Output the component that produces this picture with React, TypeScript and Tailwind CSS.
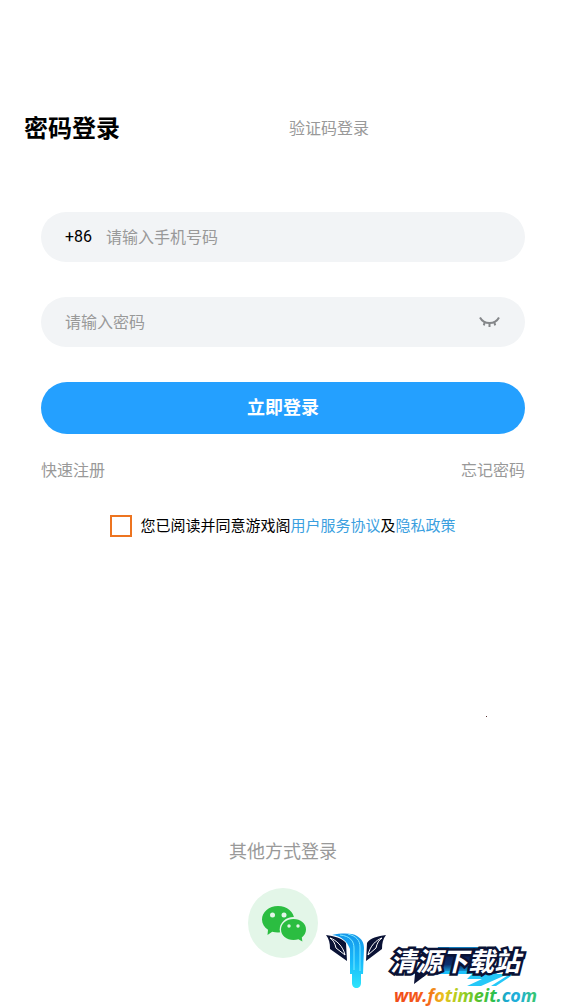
import { useState } from "react";

const fontStack = "font-['Roboto','Noto_Sans_CJK_SC',sans-serif]";

const ClosedEye = () => {
    return (
        <svg viewBox="0 0 22 12" className="w-[22px] h-3" fill="none" stroke="#85878a" strokeWidth="2">
            <path d="M1 1.500C3 5.200 6.500 7 10.500 7s7.500-1.800 9.500-5.500" />
            <path d="M10.500 7v4M5.800 6l-1 3.400M15.200 6l1 3.400" />
        </svg>
    );
};

const WechatIcon = () => {
    return (
        <svg viewBox="0 0 70 70" className="size-[70px]">
            <circle cx="35" cy="35" r="35" fill="#e3f6e8" />
            <path
                fill="#2bbd41"
                d="M30 18C21 18 14 24 14 31.500c0 4.200 2.300 7.800 6 10.300L19.500 47l4.700-3.300c1.800.5 3.800.8 5.800.8 9 0 16.200-5.800 16.200-13S39 18 30 18z"
            />
            <ellipse cx="45.500" cy="41.500" rx="13.800" ry="12.400" fill="#e3f6e8" />
            <path
                fill="#2bbd41"
                d="M45.500 31c-7 0-12.500 4.600-12.500 10.500S38.500 52 45.500 52c1.800 0 3.400-.3 4.900-.8l4 2.300-.6-4c2.600-2 4.200-4.800 4.200-8C58 35.600 52.500 31 45.500 31z"
            />
            <g fill="#e3f6e8">
                <circle cx="24.500" cy="27" r="2.500" />
                <circle cx="36" cy="27" r="2.500" />
                <circle cx="41" cy="38" r="1.700" />
                <circle cx="50" cy="38" r="1.700" />
            </g>
        </svg>
    );
};

const SiteMark = () => {
    return (
        <svg viewBox="0 0 214 74" className="w-[214px] h-[74px]">
            <defs>
                <linearGradient id="beam" x1="0" y1="0" x2="0" y2="1">
                    <stop offset="0" stopColor="#1596ea" />
                    <stop offset="0.5" stopColor="#18b9fb" />
                    <stop offset="1" stopColor="#2ee4fb" />
                </linearGradient>
                <linearGradient id="plate" x1="0" y1="0" x2="0" y2="1">
                    <stop offset="0" stopColor="#1586c8" />
                    <stop offset="0.25" stopColor="#0a1b50" />
                    <stop offset="0.65" stopColor="#0c2f6e" />
                    <stop offset="1" stopColor="#1cc0fa" />
                </linearGradient>
                <linearGradient id="rainbow" x1="0" y1="0" x2="1" y2="0">
                    <stop offset="0" stopColor="#f04a1c" />
                    <stop offset="0.23" stopColor="#f5601a" />
                    <stop offset="0.34" stopColor="#ecc01c" />
                    <stop offset="0.46" stopColor="#a8d020" />
                    <stop offset="0.6" stopColor="#50c030" />
                    <stop offset="0.7" stopColor="#2cc04c" />
                    <stop offset="0.78" stopColor="#1ca8d0" />
                    <stop offset="0.88" stopColor="#20b0dc" />
                    <stop offset="1" stopColor="#38c860" />
                </linearGradient>
            </defs>

            <g fill="#0a1235">
                <path d="M0 3c8 1 16 3 20 8l1 18L4 17C4 11 3 7 0 3z" />
                <path d="M60 3c-8 1-16 3-19 8l-1 18 16-12c0-6 1-10 4-14z" />
            </g>
            <g fill="none" stroke="#fff">
                <path d="M4 6c6 2 13 8 15 17l-9-7C9 11 7 8 4 6z" />
                <path d="M56 6c-6 2-12 8-14 17l8-7c1-5 3-8 6-10z" />
            </g>
            <path
                fill="url(#beam)"
                d="M6 3c10-2 20-2 25 1 5 3 7 7 7 12l-1 26h-2v9c0 3-2 5-4.500 5S26 54 26 51v-9h-2V17C21 9 15 4 6 3z"
            />
            <path fill="none" stroke="#7eeaff" d="M14 3c10 1 14 6 14 13v22M22 2c8 2 12 6 12 13v24" />

            <path fill="url(#plate)" d="M112 15h54l-4 27h-56z" />
            <path fill="#1cc0fa" d="M96 42l12-3h66l-4 3z" />
            <path fill="#0a1235" d="M86 39h9l9 1-16 12 1-10z" />
            <path fill="#25c8f8" d="M146 42h36l-27 12h-14l15-7h-15zM184 42h4l-18 12h-5z" />
            <text
                x="64"
                y="39"
                className="text-[26px] font-bold italic font-['Noto_Sans_CJK_SC',sans-serif]"
                fill="#fff"
                stroke="#0a1235"
                strokeWidth="5"
                strokeLinejoin="miter"
                strokeMiterlimit="2"
                paintOrder="stroke"
            >
                清源下载站
            </text>
            <text x="68" y="70" className="text-[18px] font-bold italic font-['Open_Sans',sans-serif]" fill="url(#rainbow)">
                ww.fotimeit.com
            </text>
        </svg>
    );
};

const App = () => {
    const [agreed, setAgreed] = useState(false);

    return (
        <div className={`relative flex flex-col min-h-screen bg-white text-black ${fontStack}`}>
            <header className="grid grid-cols-2 items-center pt-[113px] px-6">
                <button type="button" className="justify-self-start text-2xl font-bold">密码登录</button>
                <button type="button" className="justify-self-start ml-1.5 text-[16px] text-[#999]">验证码登录</button>
            </header>

            <form className="flex flex-col px-[41px] pt-[67px]" onSubmit={(e) => e.preventDefault()}>
                <div className="flex items-center h-[50px] rounded-full bg-[#f2f4f6] px-6">
                    <label htmlFor="phone" className="text-[16px]">+86</label>
                    <input
                        id="phone"
                        type="tel"
                        placeholder="请输入手机号码"
                        className="flex-1 min-w-0 ml-3.5 pt-0.5 bg-transparent text-[16px] outline-none placeholder:text-[#999]"
                    />
                </div>

                <div className="flex items-center h-[50px] mt-[35px] rounded-full bg-[#f2f4f6] px-6">
                    <input
                        type="password"
                        aria-label="密码"
                        placeholder="请输入密码"
                        className="flex-1 min-w-0 pt-0.5 bg-transparent text-[16px] outline-none placeholder:text-[#999]"
                    />
                    <button type="button" aria-label="显示密码">
                        <ClosedEye />
                    </button>
                </div>

                <button type="submit" className="h-[52px] mt-[35px] rounded-full bg-[#24a0ff] text-lg font-bold text-white">
                    立即登录
                </button>

                <div className="flex justify-between mt-[25px] text-[16px] text-[#999]">
                    <a href="#register">快速注册</a>
                    <a href="#forgot">忘记密码</a>
                </div>

                <div className="flex items-center justify-center mt-8 text-[15px]">
                    <input
                        id="agree"
                        type="checkbox"
                        checked={agreed}
                        onChange={(e) => setAgreed(e.target.checked)}
                        className="appearance-none size-[22px] mr-2 border-2 border-[#ed7420] bg-white checked:bg-[#ed7420]"
                    />
                    <label htmlFor="agree">您已阅读并同意游戏阁</label>
                    <a href="#terms" className="text-[#3b9fdf]">用户服务协议</a>
                    <span>及</span>
                    <a href="#privacy" className="text-[#3b9fdf]">隐私政策</a>
                </div>
            </form>

            <footer className="flex flex-col items-center mt-auto pb-12">
                <p className="text-lg text-[#999]">其他方式登录</p>
                <button type="button" aria-label="微信登录" className="mt-[22px]">
                    <WechatIcon />
                </button>
            </footer>

            <div className="absolute right-[26px] bottom-0">
                <SiteMark />
            </div>
            <span className="absolute right-[79px] bottom-[289px] size-px bg-[#5a3030]" />
        </div>
    );
};

export default App;
